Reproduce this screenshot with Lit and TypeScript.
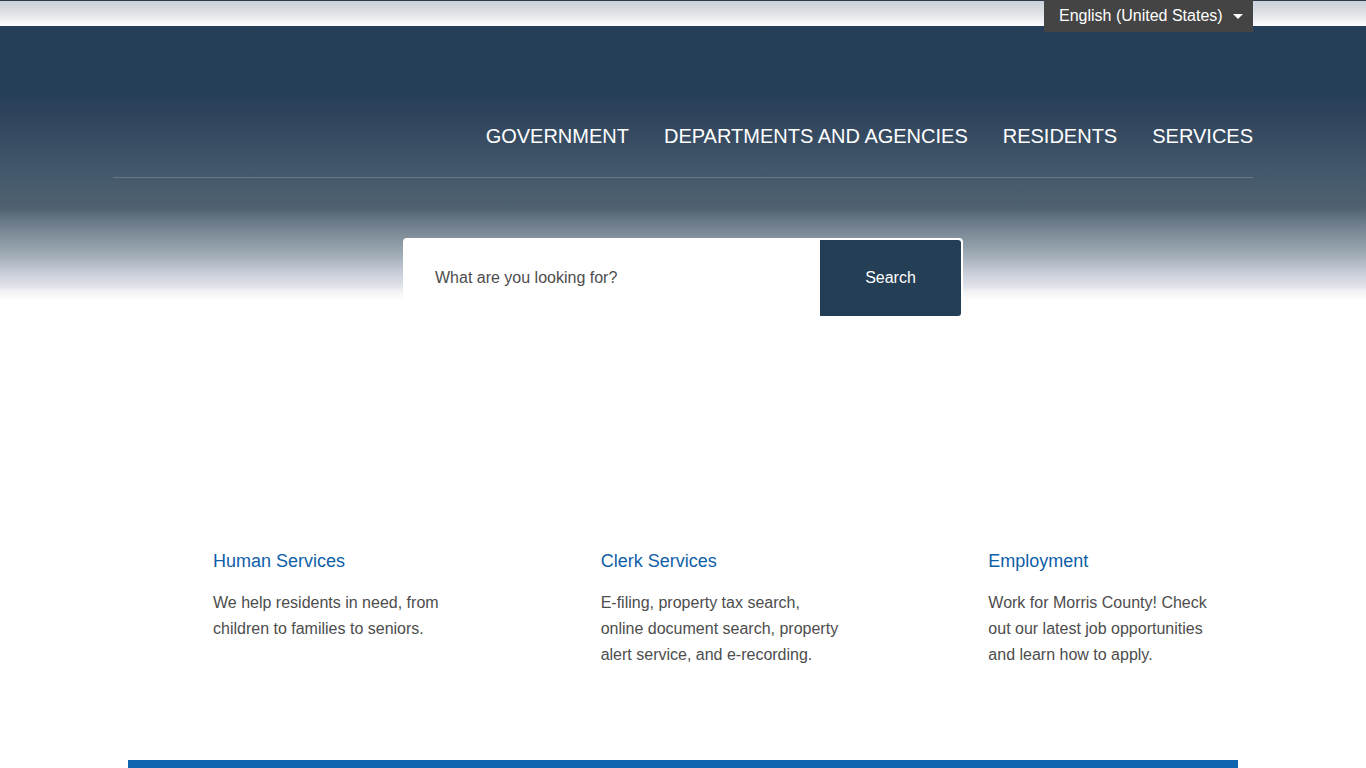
import { LitElement, html, css } from "lit";
import { customElement } from "lit/decorators.js";

const NAV = ["Government", "Departments and Agencies", "Residents", "Services"];

const CARDS = [
  { title: "Human Services", text: "We help residents in need, from children to families to seniors." },
  { title: "Clerk Services", text: "E-filing, property tax search, online document search, property alert service, and e-recording." },
  { title: "Employment", text: "Work for Morris County! Check out our latest job opportunities and learn how to apply." },
];

@customElement("app-root")
export class AppRoot extends LitElement {
  static styles = css`
    :host {
      display: block;
      background: #fff;
      color: #4d4d4d;
      font: 16px/26px "Liberation Sans", Arial, sans-serif;
    }
    * {
      box-sizing: border-box;
    }
    .container {
      max-width: 1140px;
      margin: 0 auto;
    }
    .topbar {
      height: 26px;
      border-top: 1px solid #2d3a4c;
      background: linear-gradient(#c8d1dc, #dcdfe2 40%, #fbfdff);
    }
    .topbar .container {
      position: relative;
    }
    .language {
      position: absolute;
      top: -1px;
      right: 0;
    }
    .language select {
      display: block;
      appearance: none;
      width: 209px;
      height: 32px;
      margin: 0;
      padding: 0 15px;
      border: 0;
      border-radius: 0;
      background: #444;
      color: #fff;
      font: inherit;
    }
    .caret {
      position: absolute;
      top: 14px;
      right: 10px;
      width: 10px;
      height: 5px;
      fill: #fff;
      pointer-events: none;
    }
    .hero {
      background: linear-gradient(
        #243f57 0,
        #243f57 66px,
        #2b4059 76px,
        #34495f 104px,
        #43586c 144px,
        #4f6170 182px,
        #687786 194px,
        #81909b 210px,
        #a0acb6 229px,
        #c5cad5 245px,
        #e2e4ec 261px,
        #f2f2f3 265px,
        #fff 275px
      );
    }
    .nav {
      display: flex;
      justify-content: flex-end;
      gap: 35px;
      padding: 97px 0 28px;
      border-bottom: 1px solid #64788a;
    }
    .nav a {
      color: #fff;
      font-size: 20px;
      text-decoration: none;
      text-transform: uppercase;
    }
    .search {
      display: flex;
      max-width: 560px;
      height: 80px;
      margin: 60px auto 0;
      padding: 2px;
      border-radius: 4px;
      background: #fff;
    }
    .search input {
      flex: 1;
      min-width: 0;
      padding: 0 30px;
      border: 0;
      background: transparent;
      color: #4d4d4d;
      font: inherit;
      outline: none;
    }
    .search input::placeholder {
      color: #4d4d4d;
      opacity: 1;
    }
    .search button {
      width: 141px;
      border: 0;
      border-radius: 0 3px 3px 0;
      background: #243e55;
      color: #fff;
      font: inherit;
    }
    .cards {
      display: grid;
      grid-template-columns: repeat(3, 1fr);
      column-gap: 53px;
      padding: 230px 15px 92px;
    }
    .card {
      padding: 0 10px 0 85px;
    }
    .card h2 {
      margin: 0 0 16px;
      font-size: 18px;
      font-weight: 400;
    }
    .card a {
      color: #0f5fa8;
      text-decoration: none;
    }
    .card p {
      margin: 0;
    }
    .band {
      padding: 0 15px;
    }
    .band::before {
      content: "";
      display: block;
      height: 8px;
      background: #1065b0;
    }
  `;

  render() {
    return html`
      <div class="topbar">
        <div class="container">
          <div class="language">
            <select aria-label="Language">
              <option>English (United States)</option>
            </select>
            <svg class="caret" viewBox="0 0 10 5" aria-hidden="true"><path d="M0 0h10L5 5z" /></svg>
          </div>
        </div>
      </div>
      <header class="hero">
        <div class="container">
          <nav class="nav">${NAV.map((item) => html`<a href="#">${item}</a>`)}</nav>
          <form class="search" role="search" @submit=${(e: Event) => e.preventDefault()}>
            <input type="text" aria-label="Search" placeholder="What are you looking for?" />
            <button type="submit">Search</button>
          </form>
        </div>
      </header>
      <main>
        <section class="container cards">
          ${CARDS.map(
            (card) => html`
              <article class="card">
                <h2><a href="#">${card.title}</a></h2>
                <p>${card.text}</p>
              </article>
            `
          )}
        </section>
        <div class="container band"></div>
      </main>
    `;
  }
}
